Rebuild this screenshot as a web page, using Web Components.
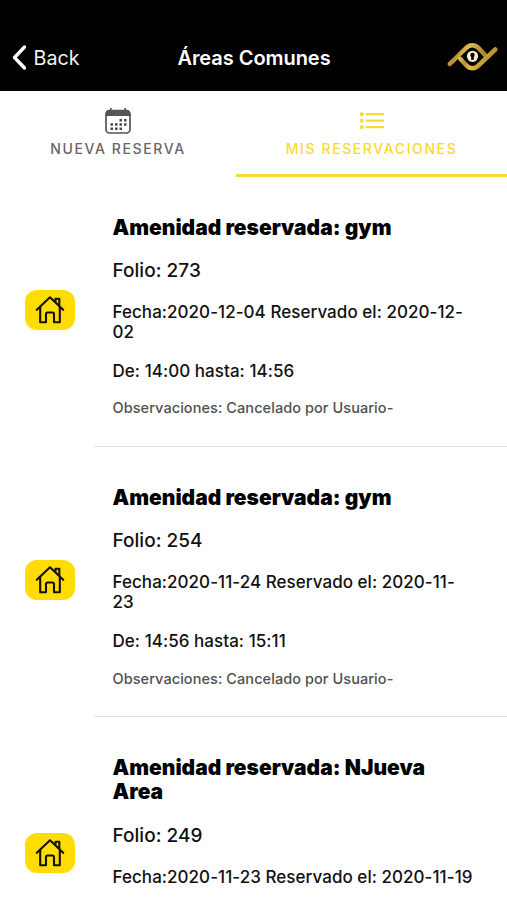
<!DOCTYPE html>
<html lang="es">
<head>
<meta charset="utf-8">
<title>Áreas Comunes</title>
<style>
html, body { margin: 0; height: 900px; overflow: hidden; background: #fff; }
body { font-family: Inter, "Liberation Sans", sans-serif; color: #000; }
</style>
</head>
<body>
<app-screen></app-screen>
<script>
class Base extends HTMLElement {
  connectedCallback() {
    if (!this.shadowRoot) this.attachShadow({ mode: 'open' }).innerHTML = this.render();
  }
}

customElements.define('ui-icon', class extends Base {
  render() {
    const icons = {
      back: `<svg width="16" height="26" viewBox="0 0 16 26"><path d="M14.500 2 4.500 12.500 14.500 23" fill="none" stroke="#fff" stroke-width="3.400" stroke-linecap="round" stroke-linejoin="round"/></svg>`,
      logo: `<svg width="52" height="32" viewBox="0 0 52 32"><defs><linearGradient id="g" x1="0" y1="0" x2="1" y2="0.300"><stop offset="0" stop-color="#ecd06a"/><stop offset=".3" stop-color="#b88d32"/><stop offset=".5" stop-color="#dfbd50"/><stop offset=".75" stop-color="#c79e38"/><stop offset="1" stop-color="#b08a2c"/></linearGradient></defs>
        <g fill="none" stroke="url(#g)" stroke-width="4.500" stroke-linecap="round" stroke-linejoin="round"><path d="M3.800 22 19.500 6.500Q22.500 3.200 26.300 3.200T33 6.500L39 13"/><path d="M14.500 17 20 23Q23 26.300 26.500 26.300T33 23L49.300 7.500"/></g>
        <circle cx="26.500" cy="14.300" r="5.600" fill="#fbf0c4"/><circle cx="26.500" cy="13" r="2.200"/><path d="M25.500 13h2l.5 4.800h-3z"/></svg>`,
      calendar: `<svg width="28" height="28" viewBox="0 0 28 28"><rect x="2" y="3.500" width="24" height="22.500" rx="3.500" fill="#fff" stroke="#555" stroke-width="1.700"/><path d="M2 8.500V7a3.500 3.500 0 0 1 3.500-3.500h17A3.500 3.500 0 0 1 26 7v1.500z" fill="#555" stroke="#555"/><path d="M6.800 1v4M21.200 1v4" stroke="#555" stroke-width="1.700"/><path fill="#484848" d="M15.500 12h2.500v2.500h-2.500zM20 12h2.500v2.500h-2.500zM6.500 16.200h2.500v2.500h-2.500zM11 16.200h2.500v2.500h-2.500zM15.500 16.200h2.500v2.500h-2.500zM20 16.200h2.500v2.500h-2.500zM6.500 20.500h2.500v2.500h-2.500zM11 20.500h2.500v2.500h-2.500zM15.500 20.500h2.500v2.500h-2.500z"/></svg>`,
      list: `<svg width="26" height="18" viewBox="0 0 26 18"><g fill="#f9da32"><rect x="1" y="0.300" width="3.600" height="3.600" rx=".9"/><rect x="1" y="6.800" width="3.600" height="3.600" rx=".9"/><rect x="1" y="13.300" width="3.600" height="3.600" rx=".9"/><rect x="6.500" y="0.900" width="18.500" height="2.400" rx="1"/><rect x="6.500" y="7.400" width="18.500" height="2.400" rx="1"/><rect x="6.500" y="13.900" width="18.500" height="2.400" rx="1"/></g></svg>`,
      home: `<svg width="30" height="30" viewBox="0 0 30 30"><g fill="none" stroke="#151100" stroke-width="2.100" stroke-linecap="round" stroke-linejoin="round"><path d="M1.800 14.800 15 2.300 28.200 14.800"/><path d="M5.200 12v15.300h5.800v-8.300a1.500 1.500 0 0 1 1.500-1.500h5a1.500 1.500 0 0 1 1.500 1.500v8.300h5.800V12"/><path d="M20.500 6.600V3.800h3.800v6.700"/></g></svg>`
    };
    return `<style>:host{display:block;line-height:0}svg{display:block}</style>${icons[this.getAttribute('name')]}`;
  }
});

customElements.define('nav-header', class extends Base {
  render() {
    return `<style>
      :host{display:grid;grid-template-columns:1fr auto 1fr;align-items:center;height:91px;padding:25px 9px 0 10px;box-sizing:border-box;background:#000;color:#fff;font-size:20px}
      .back{display:flex;align-items:center;gap:7.500px;color:#f2f2f2;font-size:19.700px}
      .title{font-weight:600;font-size:20px;letter-spacing:-.05px}
      ui-icon[name=logo]{justify-self:end}
      </style><div class="back"><ui-icon name="back"></ui-icon><span>Back</span></div>
      <span class="title"><slot></slot></span><ui-icon name="logo"></ui-icon>`;
  }
});

customElements.define('nav-tab', class extends Base {
  render() {
    return `<style>
      :host{display:flex;flex-direction:column;align-items:center;box-sizing:border-box;height:86px;padding-top:15px;color:#666;font-size:14px;font-weight:500;letter-spacing:1.600px;line-height:20px;border-bottom:3px solid transparent}
      :host([active]){color:#f9da32;border-color:#f9da32}
      .icon{height:29px;display:flex;align-items:center;margin-bottom:4px}
      </style><div class="icon"><ui-icon name="${this.getAttribute('icon')}"></ui-icon></div><span><slot></slot></span>`;
  }
});

customElements.define('reservation-item', class extends Base {
  render() {
    return `<style>
      :host{display:flex}
      .lead{width:94px;display:flex;align-items:center;box-sizing:border-box;padding:0 0 4px 25px}
      .badge{width:50px;height:40px;border-radius:12px;background:#ffdc04;display:flex;align-items:center;justify-content:center}
      .body{flex:1;box-sizing:border-box;padding:38.600px 32px 28.800px 18.500px;border-bottom:1px solid #e2e2e2}
      </style><div class="lead"><div class="badge"><ui-icon name="home"></ui-icon></div></div>
      <div class="body"><slot></slot></div>`;
  }
});

customElements.define('item-line', class extends Base {
  render() {
    return `<style>
      :host{display:block;font-size:17px;font-weight:500;line-height:20px;letter-spacing:.05px;margin-top:19px;color:#111}
      :host([kind=title]){font-size:21px;font-weight:900;line-height:24.500px;letter-spacing:0;margin-top:0;color:#000}
      :host([kind=folio]){font-size:19px;line-height:24px;letter-spacing:.03px;margin-top:19px}
      :host([kind=date]){margin-top:18.800px}
      :host([kind=note]){font-size:14.500px;line-height:18px;letter-spacing:.07px;margin-top:18.500px;color:#505050}
      </style><slot></slot>`;
  }
});

customElements.define('app-screen', class extends Base {
  render() {
    const items = [
      ['gym', 273, '2020-12-04', '2020-12-<wbr>02', '14:00 hasta: 14:56'],
      ['gym', 254, '2020-11-24', '2020-11-<wbr>23', '14:56 hasta: 15:11'],
      ['NJueva Area', 249, '2020-11-23', '2020-11-<wbr>19']
    ];
    return `<style>
      :host{display:block;height:900px;overflow:hidden;background:#fff}
      .tabs{display:grid;grid-template-columns:236px 1fr}
      reservation-item:last-child{height:276px}
      </style><nav-header>Áreas Comunes</nav-header>
      <div class="tabs"><nav-tab icon="calendar">NUEVA RESERVA</nav-tab><nav-tab icon="list" active>MIS RESERVACIONES</nav-tab></div>
      <div class="list">${items.map(([a, f, d, r, t]) => `<reservation-item>
        <item-line kind="title">Amenidad reservada: ${a}</item-line>
        <item-line kind="folio">Folio: ${f}</item-line>
        <item-line kind="date">Fecha:${d} Reservado el: ${r}</item-line>
        ${t ? `<item-line>De: ${t}</item-line>
        <item-line kind="note">Observaciones: Cancelado por Usuario-</item-line>` : ''}
      </reservation-item>`).join('')}</div>`;
  }
});
</script>
</body>
</html>
